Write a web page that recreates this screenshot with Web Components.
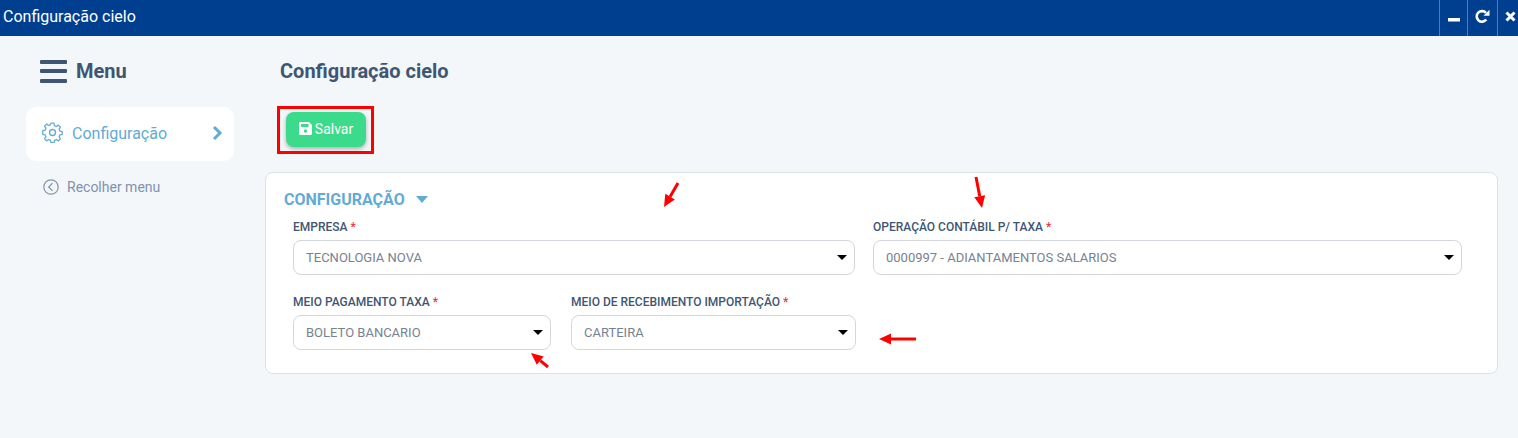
<!DOCTYPE html>
<html lang="pt-BR">
<head>
<meta charset="utf-8">
<title>Configuração cielo</title>
<style>
  html, body { margin: 0; height: 100%; }
  body { background: #f3f7fa; font-family: Roboto, "Liberation Sans", sans-serif; overflow: hidden; }
  app-shell { height: 438px; }
</style>
</head>
<body>
<app-shell>
  <title-bar slot="top">Configuração cielo</title-bar>
  <side-menu slot="side"></side-menu>
  <main-panel heading="Configuração cielo">
    <save-button slot="actions">Salvar</save-button>
    <config-card heading="CONFIGURAÇÃO">
      <select-field style="width:562px" label="EMPRESA" value="TECNOLOGIA NOVA"></select-field>
      <select-field style="width:589px;margin-left:18px" label="OPERAÇÃO CONTÁBIL P/ TAXA" value="0000997 - ADIANTAMENTOS SALARIOS"></select-field>
      <select-field style="width:258px" label="MEIO PAGAMENTO TAXA" value="BOLETO BANCARIO"></select-field>
      <select-field style="width:285px;margin-left:20px" label="MEIO DE RECEBIMENTO IMPORTAÇÃO" value="CARTEIRA"></select-field>
    </config-card>
  </main-panel>
  <red-arrow style="left:661px;top:180px" x1="17" y1="3" x2="3" y2="27"></red-arrow>
  <red-arrow style="left:966px;top:175px" x1="10" y1="2" x2="16" y2="33"></red-arrow>
  <red-arrow style="left:876px;top:330px" x1="40" y1="9" x2="3" y2="9"></red-arrow>
  <red-arrow style="left:526px;top:349px" x1="22" y1="18" x2="5" y2="4"></red-arrow>
</app-shell>

<script>
class AppShell extends HTMLElement {
  constructor() {
    super();
    this.attachShadow({mode: 'open'}).innerHTML = `
      <style>
        :host { display: grid; grid-template-columns: 265px 1fr; grid-template-rows: 36px 1fr; position: relative; }
        .top { grid-column: 1 / 3; }
      </style>
      <div class="top"><slot name="top"></slot></div>
      <slot name="side"></slot>
      <slot></slot>
    `;
  }
}

class TitleBar extends HTMLElement {
  constructor() {
    super();
    this.attachShadow({mode: 'open'}).innerHTML = `
      <style>
        :host { display: flex; height: 36px; align-items: center; background: #003f8f; color: #fff; font-size: 16px; padding-left: 3px; }
        .title { flex: 1; position: relative; top: -2px; }
        .btn { height: 36px; border-left: 1px solid #3f7fd0; display: flex; align-items: center; justify-content: center; box-sizing: border-box; }
        svg { display: block; }
      </style>
      <div class="title"><slot></slot></div>
      <div class="btn" style="width:28px">
        <svg width="14" height="14" viewBox="0 0 14 14"><rect x="1" y="7" width="12" height="3.5" fill="#fff"/></svg>
      </div>
      <div class="btn" style="width:30px">
        <svg width="15" height="15" viewBox="0 0 15 15" style="margin-top:-4px"><path d="M11.300 10.500A5.300 5.300 0 1 1 11 3.900" fill="none" stroke="#fff" stroke-width="2.600"/><path d="M8.500 6.800h6V.8z" fill="#fff"/></svg>
      </div>
      <div class="btn" style="width:21px">
        <svg width="11" height="11" viewBox="0 0 11 11" style="margin:-4px 0 0 5px"><path d="M1.500 1.500l8 8M9.500 1.500l-8 8" stroke="#fff" stroke-width="3"/></svg>
      </div>
    `;
  }
}

class SideMenu extends HTMLElement {
  constructor() {
    super();
    this.attachShadow({mode: 'open'}).innerHTML = `
      <style>
        :host { display: block; padding: 23px 0 0 26px; }
        .head { display: flex; align-items: center; height: 24px; padding-left: 14px; gap: 9px; color: #3f5673; font-size: 20px; font-weight: 700; }
        .burger { width: 27px; height: 23px; display: flex; flex-direction: column; justify-content: space-between; }
        .burger i { display: block; height: 4px; border-radius: 1px; background: #3f5673; }
        .item { width: 208px; height: 54px; margin-top: 24px; box-sizing: border-box; background: #fff; border-radius: 10px; display: flex; align-items: center; padding: 0 11px 2px 16px; color: #62abd5; font-size: 16px; }
        .item span { flex: 1; margin-left: 9px; }
        .collapse { display: flex; align-items: center; margin: 18px 0 0 17px; color: #7f93ad; font-size: 14px; gap: 8px; }
        svg { display: block; }
      </style>
      <div class="head"><div class="burger"><i></i><i></i><i></i></div>Menu</div>
      <div class="item">
        <svg width="21" height="21" viewBox="0 0 24 24" fill="none" stroke="#62abd5" stroke-width="1.6" stroke-linejoin="round" style="margin-top:-2px">
          <circle cx="12" cy="12" r="3.4"/>
          <path d="M10.2 1.6h3.6l.6 3 2.2 1 2.6-1.7 2.5 2.6-1.6 2.6.9 2.2 3 .6v3.4l-3 .7-.9 2.1 1.6 2.6-2.5 2.6-2.6-1.7-2.2 1-.6 3h-3.6l-.6-3-2.2-1-2.6 1.7-2.5-2.6 1.6-2.6-.9-2.1-3-.7V10.600l3-.6.9-2.200-1.600-2.600 2.500-2.600 2.600 1.700 2.200-1z" transform="translate(12 12) scale(.93) translate(-12 -13)"/>
        </svg>
        <span>Configuração</span>
        <svg width="11" height="16" viewBox="0 0 11 16"><path d="M2 2l6 6-6 6" fill="none" stroke="#62abd5" stroke-width="3"/></svg>
      </div>
      <div class="collapse">
        <svg width="16" height="16" viewBox="0 0 16 16" fill="none" stroke="#7f93ad" stroke-width="1.200"><circle cx="8" cy="8" r="7.200"/><path d="M9.500 4.200L5.700 8l3.800 3.800"/></svg>
        Recolher menu
      </div>
    `;
  }
}

class MainPanel extends HTMLElement {
  constructor() {
    super();
    this.attachShadow({mode: 'open'}).innerHTML = `
      <style>
        :host { display: block; padding-right: 20px; }
        h1 { margin: 0; padding: 23px 0 0 15px; height: 47px; box-sizing: border-box; font-size: 20px; line-height: 24px; font-weight: 700; color: #3f5673; }
        .actions { margin: 23px 0 18px 12px; }
      </style>
      <h1>${this.getAttribute('heading')}</h1>
      <div class="actions"><slot name="actions"></slot></div>
      <slot></slot>
    `;
  }
}

class SaveButton extends HTMLElement {
  constructor() {
    super();
    this.attachShadow({mode: 'open'}).innerHTML = `
      <style>
        :host { display: block; width: 97px; height: 48px; box-sizing: border-box; border: 3px solid #f00; padding: 3px 0 0 6px; }
        .btn { width: 80px; height: 35px; box-sizing: border-box; padding-bottom: 2px; border-radius: 8px; background: #3bdb8b; color: #fff; font-size: 14px; display: flex; align-items: center; justify-content: center; gap: 3px; box-shadow: 0 2px 4px rgba(60,70,80,.4); }
        svg { display: block; }
      </style>
      <div class="btn">
        <svg width="13" height="13" viewBox="0 0 13 13"><path d="M1.500 0H10l3 3v8.500A1.500 1.500 0 0 1 11.500 13h-10A1.500 1.500 0 0 1 0 11.500v-10A1.500 1.500 0 0 1 1.500 0z" fill="#fff"/><rect x="2" y="2" width="7.500" height="3" fill="#3bdb8b"/><circle cx="6.500" cy="9" r="1.700" fill="#3bdb8b"/></svg>
        <slot></slot>
      </div>
    `;
  }
}

class ConfigCard extends HTMLElement {
  constructor() {
    super();
    this.attachShadow({mode: 'open'}).innerHTML = `
      <style>
        :host { display: block; height: 202px; box-sizing: border-box; background: #fff; border: 1px solid #dde1e7; border-radius: 8px; padding: 15px 0 0 18px; }
        h2 { margin: 0; height: 22px; display: flex; align-items: center; gap: 11px; font-size: 16px; font-weight: 700; color: #62abd5; }
        h2 i { width: 0; height: 0; border: 6.500px solid transparent; border-top: 7px solid #62abd5; border-bottom: 0; }
        .fields { display: flex; flex-wrap: wrap; margin: 7px 0 0 9px; row-gap: 17px; width: 1180px; }
      </style>
      <h2>${this.getAttribute('heading')}<i></i></h2>
      <div class="fields"><slot></slot></div>
    `;
  }
}

class SelectField extends HTMLElement {
  constructor() {
    super();
    this.attachShadow({mode: 'open'}).innerHTML = `
      <style>
        :host { display: block; }
        label { display: block; height: 20px; line-height: 20px; margin-bottom: 3px; font-size: 12px; font-weight: 500; color: #3f5673; }
        label b { color: #f0353f; font-weight: 500; }
        .box { height: 35px; box-sizing: border-box; background: #fff; border: 1px solid #d3d6dc; border-radius: 8px; display: flex; align-items: center; padding: 0 7px 0 12px; font-size: 13px; color: #778290; }
        .box span { flex: 1; }
        .box i { width: 0; height: 0; border: 5px solid transparent; border-top: 5px solid #000; border-bottom: 0; }
      </style>
      <label>${this.getAttribute('label')} <b>*</b></label>
      <div class="box"><span>${this.getAttribute('value')}</span><i></i></div>
    `;
  }
}

// setas vermelhas das anotações do print
class RedArrow extends HTMLElement {
  constructor() {
    super();
    const [x1, y1, x2, y2] = ['x1', 'y1', 'x2', 'y2'].map(a => +this.getAttribute(a));
    const ang = Math.atan2(y2 - y1, x2 - x1);
    const len = 12, half = 5.5;
    const bx = x2 - Math.cos(ang) * len, by = y2 - Math.sin(ang) * len;
    const nx = -Math.sin(ang) * half, ny = Math.cos(ang) * half;
    this.attachShadow({mode: 'open'}).innerHTML = `
      <style>
        :host { display: block; position: absolute; width: 44px; height: 38px; }
      </style>
      <svg width="44" height="38">
        <line x1="${x1}" y1="${y1}" x2="${bx}" y2="${by}" stroke="#f00" stroke-width="3"/>
        <polygon points="${x2},${y2} ${bx + nx},${by + ny} ${bx - nx},${by - ny}" fill="#f00"/>
      </svg>
    `;
  }
}

customElements.define('app-shell', AppShell);
customElements.define('title-bar', TitleBar);
customElements.define('side-menu', SideMenu);
customElements.define('main-panel', MainPanel);
customElements.define('save-button', SaveButton);
customElements.define('config-card', ConfigCard);
customElements.define('select-field', SelectField);
customElements.define('red-arrow', RedArrow);
</script>
</body>
</html>
